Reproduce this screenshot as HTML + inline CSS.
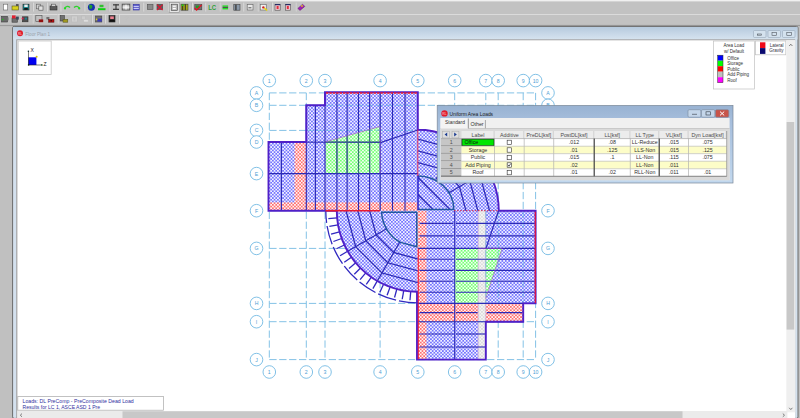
<!DOCTYPE html>
<html><head><meta charset="utf-8"><title>Floor Plan</title>
<style>
html,body{margin:0;padding:0;width:800px;height:418px;overflow:hidden;background:#c0c0c0;}
svg{position:absolute;left:0;top:0;display:block}
</style></head><body>
<svg width="800" height="418" viewBox="0 0 800 418" font-family="Liberation Sans, sans-serif">
<!-- toolbar -->
<rect x="0" y="0" width="800" height="418" fill="#c0c0c0"/><rect x="0" y="0" width="800" height="26" fill="#c2c2c2"/>
<rect x="0" y="0" width="800" height="1.4" fill="#f0f0f0"/>
<rect x="0" y="14" width="800" height="0.8" fill="#e2e2e2"/>
<rect x="0" y="24.9" width="800" height="1.2" fill="#9c9c9c"/>
<rect x="3.4" y="4.2" width="4.3" height="5.8" fill="#ffffff" stroke="#6a6a6a" stroke-width="0.6"/>
<rect x="12" y="6" width="6.6" height="4" fill="#d8d020" stroke="#5a5a20" stroke-width="0.6"/>
<rect x="16" y="4.2" width="2.6" height="1.6" fill="#404040"/>
<rect x="23" y="4.2" width="6" height="5.8" fill="#208a90" stroke="#202020" stroke-width="0.6"/>
<rect x="24.3" y="4.6" width="3.4" height="2.4" fill="#f0f0f0"/>
<rect x="24.2" y="8" width="3.6" height="1.8" fill="#101010"/>
<rect x="36.4" y="4.2" width="4" height="4.6" fill="#d0d0d0" stroke="#606060" stroke-width="0.6"/>
<rect x="38.8" y="6" width="4.2" height="4.2" fill="#e0e0e0" stroke="#505050" stroke-width="0.6"/>
<rect x="50" y="6" width="7" height="4" fill="#5a5a5a" stroke="#303030" stroke-width="0.6"/>
<rect x="51.5" y="4.2" width="4" height="2" fill="#e0e0e0" stroke="#505050" stroke-width="0.6"/>
<path d="M64.6,8.4 Q67,4.8 70,7.6" stroke="#30d030" stroke-width="1.4" fill="none"/><circle cx="65" cy="8.4" r="1.1" fill="#20e020"/>
<path d="M74,7.6 Q77,4.8 79.6,8.4" stroke="#30d030" stroke-width="1.4" fill="none"/><circle cx="79.2" cy="8.4" r="1.1" fill="#20e020"/>
<circle cx="91.4" cy="7.2" r="3.5" fill="#1830b0"/><path d="M89,5 Q91,4 92.5,6 L91.8,8.6 L89.6,9 Z" fill="#20a030"/>
<rect x="98" y="8.2" width="7.5" height="2" fill="#10d010"/>
<rect x="99.5" y="4.8" width="4" height="2.4" fill="#30c030"/>
<rect x="113" y="4.2" width="6" height="1.3" fill="#404040"/>
<rect x="113" y="8.7" width="6" height="1.3" fill="#404040"/>
<rect x="115.4" y="4.2" width="1.2" height="5.8" fill="#404040"/>
<rect x="122.2" y="4.2" width="7.6" height="5.8" fill="#c8c8c8" stroke="#505050" stroke-width="0.9"/>
<rect x="125.5" y="4.6" width="1" height="5" fill="#ffffff"/>
<rect x="122.6" y="6.6" width="6.8" height="1" fill="#ffffff"/>
<rect x="133.2" y="4.4" width="6" height="5.6" fill="#6868d0" stroke="#3030a0" stroke-width="0.6"/>
<rect x="133.6" y="6" width="5.2" height="0.8" fill="#e0e0ff"/>
<rect x="133.6" y="8" width="5.2" height="0.8" fill="#e0e0ff"/>
<rect x="147.4" y="4.4" width="5.6" height="5" fill="#8a8a8a" stroke="#505050" stroke-width="0.6"/>
<rect x="157" y="4.4" width="5.6" height="5" fill="#606060" stroke="#404040" stroke-width="0.6"/>
<path d="M157,4.6 L162.6,10 M162.6,4.6 L157,10" stroke="#e01030" stroke-width="1.1"/>
<rect x="169.2" y="2.6" width="10" height="9.8" fill="#e6e6e6" stroke="#8e8e8e" stroke-width="0.6"/>
<rect x="171.2" y="4.2" width="6.2" height="6.2" fill="#b8b8b8" stroke="#404040" stroke-width="0.6"/>
<rect x="172.8" y="5.6" width="3" height="1.2" fill="#ffffff"/>
<rect x="172.8" y="8" width="3" height="1.2" fill="#ffffff"/>
<rect x="181" y="4.2" width="7" height="6" fill="#a8a818" stroke="#404040" stroke-width="0.6"/>
<rect x="182.2" y="4.2" width="1" height="6" fill="#303030"/>
<rect x="184.8" y="4.2" width="1" height="6" fill="#303030"/>
<rect x="181.8" y="4.4" width="1.8" height="1.6" fill="#20d020"/>
<rect x="194.8" y="4.6" width="7" height="5.2" fill="#707070" stroke="#404040" stroke-width="0.6"/>
<rect x="196" y="5.6" width="3" height="2.6" fill="#20a020"/>
<path d="M194.6,7.8 L196.6,10 L201.6,4.8" stroke="#e81020" stroke-width="1.2" fill="none"/>
<text x="208.2" y="10.2" font-size="7" font-weight="bold" fill="#30a038" textLength="8" lengthAdjust="spacingAndGlyphs" font-family="Liberation Sans, sans-serif">LC</text>
<rect x="222.5" y="5.4" width="5.6" height="1.4" fill="#20e020"/>
<rect x="222.5" y="8" width="5.6" height="1.4" fill="#20e020"/>
<rect x="222.5" y="6.8" width="5.6" height="1.2" fill="#505050"/>
<rect x="233.8" y="4.6" width="6.2" height="5.6" fill="#8a98a8" stroke="#404040" stroke-width="0.6"/>
<rect x="235.2" y="4.6" width="1.4" height="5.6" fill="#404040"/>
<rect x="247.2" y="4.4" width="5.8" height="5.6" fill="#e8e8e8" stroke="#606060" stroke-width="0.6"/>
<rect x="248.4" y="7" width="3" height="1.4" fill="#808080"/>
<rect x="260.2" y="4.4" width="6" height="5.6" fill="#f0f0f0" stroke="#606060" stroke-width="0.6"/>
<circle cx="263.4" cy="7.4" r="1.2" fill="#d02020"/><path d="M264.2,8 L267.2,10.6" stroke="#e8d800" stroke-width="1.3"/>
<rect x="275" y="4.4" width="5.2" height="5.8" fill="#f0c8d0" stroke="#505050" stroke-width="0.6"/>
<rect x="275" y="4.2" width="5.2" height="1" fill="#101860"/>
<rect x="276.6" y="6" width="2" height="3" fill="#e03040"/>
<rect x="285.5" y="4.4" width="5" height="5.8" fill="#f0c8d0" stroke="#505050" stroke-width="0.6"/>
<rect x="285.5" y="4.2" width="5" height="1" fill="#101860"/>
<rect x="286.8" y="6" width="2" height="3" fill="#e03040"/>
<path d="M297.8,8.4 L302.6,4.2 L304.8,6.4 L300,10.4 Z" fill="#a020b0" stroke="#602070" stroke-width="0.5"/><circle cx="302" cy="6" r="0.9" fill="#e0c020"/>
<rect x="1.6" y="16.4" width="6" height="5.6" fill="#6a6a6a" stroke="#404040" stroke-width="0.6"/>
<rect x="7.6" y="17.4" width="1.2" height="3" fill="#909090"/>
<circle cx="2.8" cy="19.6" r="0.8" fill="#20c020"/>
<rect x="12" y="18" width="5.4" height="4.2" fill="#707070" stroke="#404040" stroke-width="0.6"/>
<rect x="12" y="15.4" width="3.6" height="3" fill="#e02030"/>
<rect x="16" y="16.6" width="2.8" height="3" fill="#3a4a5a"/>
<rect x="22.4" y="16.8" width="5.6" height="5" fill="#505050" stroke="#303030" stroke-width="0.6"/>
<circle cx="22.6" cy="18.6" r="1" fill="#e02050"/>
<rect x="25" y="17.6" width="2" height="2" fill="#208090"/>
<rect x="35.8" y="15.4" width="6.2" height="6" fill="#c0c0c0" stroke="#505050" stroke-width="0.6"/>
<rect x="38.8" y="19.4" width="4.4" height="2.8" fill="#901010"/>
<rect x="46.4" y="17" width="3" height="2.4" fill="#707070"/>
<rect x="48.6" y="19.4" width="5.4" height="2.8" fill="#b01010" stroke="#501010" stroke-width="0.5"/>
<circle cx="51.2" cy="20.8" r="0.7" fill="#101010"/>
<rect x="60.2" y="15.6" width="4.2" height="5.4" fill="#707070" stroke="#404040" stroke-width="0.6"/>
<rect x="63" y="19.4" width="4.8" height="2.8" fill="#a09820" stroke="#505020" stroke-width="0.5"/>
<rect x="71.4" y="16" width="6" height="6" fill="#d0d0d0" stroke="#bcbcbc" stroke-width="0.7"/>
<rect x="73.4" y="17.6" width="2" height="3" fill="#c4c4c4"/>
<rect x="81.6" y="16" width="4" height="3.6" fill="#cccccc" stroke="#bcbcbc" stroke-width="0.7"/>
<rect x="83.6" y="19.6" width="4.6" height="2.4" fill="#dedede" stroke="#c0c0c0" stroke-width="0.6"/>
<rect x="95.6" y="16" width="6.2" height="6" fill="#707070" stroke="#404040" stroke-width="0.6"/>
<rect x="97.4" y="18.6" width="4.4" height="3" fill="#3a3ab8"/>
<circle cx="96.6" cy="19.4" r="0.8" fill="#e0d020"/>
<rect x="109" y="15.6" width="6" height="6.4" fill="#303030" stroke="#202020" stroke-width="0.6"/>
<rect x="110.2" y="16.4" width="3.6" height="2.6" fill="#f08090"/>
<rect x="110" y="20" width="4.6" height="1.6" fill="#101010"/>
<path d="M124.6,17.4 Q126.4,15.6 128.4,17.2 Q127.8,18.8 126.4,19.4 L126.4,20.4 M126.4,21.4 L126.4,22" stroke="#c0c0c0" stroke-width="0.9" fill="none"/>
<rect x="32.7" y="2.6" width="0.7" height="9" fill="#b4b4b4"/><rect x="33.400000000000006" y="2.6" width="0.6" height="9" fill="#ececec"/>
<rect x="46.7" y="2.6" width="0.7" height="9" fill="#b4b4b4"/><rect x="47.400000000000006" y="2.6" width="0.6" height="9" fill="#ececec"/>
<rect x="59.9" y="2.6" width="0.7" height="9" fill="#b4b4b4"/><rect x="60.6" y="2.6" width="0.6" height="9" fill="#ececec"/>
<rect x="83.9" y="2.6" width="0.7" height="9" fill="#b4b4b4"/><rect x="84.60000000000001" y="2.6" width="0.6" height="9" fill="#ececec"/>
<rect x="108.9" y="2.6" width="0.7" height="9" fill="#b4b4b4"/><rect x="109.60000000000001" y="2.6" width="0.6" height="9" fill="#ececec"/>
<rect x="142.8" y="2.6" width="0.7" height="9" fill="#b4b4b4"/><rect x="143.5" y="2.6" width="0.6" height="9" fill="#ececec"/>
<rect x="167.1" y="2.6" width="0.7" height="9" fill="#b4b4b4"/><rect x="167.79999999999998" y="2.6" width="0.6" height="9" fill="#ececec"/>
<rect x="191.3" y="2.6" width="0.7" height="9" fill="#b4b4b4"/><rect x="192.0" y="2.6" width="0.6" height="9" fill="#ececec"/>
<rect x="204.8" y="2.6" width="0.7" height="9" fill="#b4b4b4"/><rect x="205.5" y="2.6" width="0.6" height="9" fill="#ececec"/>
<rect x="219.0" y="2.6" width="0.7" height="9" fill="#b4b4b4"/><rect x="219.7" y="2.6" width="0.6" height="9" fill="#ececec"/>
<rect x="242.8" y="2.6" width="0.7" height="9" fill="#b4b4b4"/><rect x="243.5" y="2.6" width="0.6" height="9" fill="#ececec"/>
<rect x="257.0" y="2.6" width="0.7" height="9" fill="#b4b4b4"/><rect x="257.7" y="2.6" width="0.6" height="9" fill="#ececec"/>
<rect x="271.5" y="2.6" width="0.7" height="9" fill="#b4b4b4"/><rect x="272.2" y="2.6" width="0.6" height="9" fill="#ececec"/>
<rect x="295.0" y="2.6" width="0.7" height="9" fill="#b4b4b4"/><rect x="295.7" y="2.6" width="0.6" height="9" fill="#ececec"/>
<rect x="32.0" y="14.6" width="0.7" height="9" fill="#b4b4b4"/><rect x="32.7" y="14.6" width="0.6" height="9" fill="#ececec"/>
<rect x="57.0" y="14.6" width="0.7" height="9" fill="#b4b4b4"/><rect x="57.7" y="14.6" width="0.6" height="9" fill="#ececec"/>
<rect x="91.5" y="14.6" width="0.7" height="9" fill="#b4b4b4"/><rect x="92.2" y="14.6" width="0.6" height="9" fill="#ececec"/>
<rect x="104.5" y="14.6" width="0.7" height="9" fill="#b4b4b4"/><rect x="105.2" y="14.6" width="0.6" height="9" fill="#ececec"/>
<rect x="118.5" y="14.6" width="0.7" height="9" fill="#b4b4b4"/><rect x="119.2" y="14.6" width="0.6" height="9" fill="#ececec"/>
<!-- MDI child frame -->
<linearGradient id="ttg" x1="0" y1="0" x2="0" y2="1"><stop offset="0" stop-color="#b6cade"/><stop offset="1" stop-color="#d6e3ef"/></linearGradient>
<rect x="12.6" y="26.4" width="785.4" height="392" rx="1.5" fill="#d4e1ee" stroke="#6a6a6a" stroke-width="1"/>
<rect x="13.2" y="27" width="784.3" height="12.4" fill="url(#ttg)"/>
<circle cx="20" cy="33.3" r="3" fill="#e01c2c"/><text x="20" y="34.6" font-size="3.2" fill="#ffd0d0" text-anchor="middle">RL</text>
<text x="25.3" y="35.6" font-size="5.3" textLength="24.7" lengthAdjust="spacingAndGlyphs" fill="#9aa2aa">Floor Plan 1</text>
<g fill="#d4e2ee" stroke="#98a8b8" stroke-width="0.6">
<rect x="753.5" y="30.5" width="12.5" height="7" rx="1"/>
<rect x="768" y="30.5" width="12.5" height="7" rx="1"/>
<rect x="782.5" y="30.5" width="12.5" height="7" rx="1"/>
</g>
<g stroke="#505860" stroke-width="0.6" fill="none">
<rect x="757.5" y="34" width="4" height="1.2"/>
<rect x="772" y="32.5" width="4.5" height="3"/>
<rect x="786.8" y="32.5" width="4.5" height="3"/>
</g>
<rect x="16.2" y="39.3" width="779" height="380" fill="#a4a4a4"/>
<rect x="17.4" y="40.3" width="777.8" height="378" fill="#ffffff"/>
<!-- drawing -->
<defs><pattern id="pb" width="3.4" height="3.4" patternUnits="userSpaceOnUse"><rect width="3.4" height="3.4" fill="#f2f2ff"/><rect width="1.7" height="1.7" fill="#7474ff"/><rect x="1.7" y="1.7" width="1.7" height="1.7" fill="#7474ff"/></pattern><pattern id="pr" width="3.4" height="3.4" patternUnits="userSpaceOnUse"><rect width="3.4" height="3.4" fill="#fff4f4"/><rect width="1.7" height="1.7" fill="#ff7070"/><rect x="1.7" y="1.7" width="1.7" height="1.7" fill="#ff7070"/></pattern><pattern id="pg" width="3.4" height="3.4" patternUnits="userSpaceOnUse"><rect width="3.4" height="3.4" fill="#f4fff4"/><rect width="1.7" height="1.7" fill="#74ff74"/><rect x="1.7" y="1.7" width="1.7" height="1.7" fill="#74ff74"/></pattern><pattern id="pw" width="3.4" height="3.4" patternUnits="userSpaceOnUse"><rect width="3.4" height="3.4" fill="#f6f6f6"/><rect width="1.7" height="1.7" fill="#dcdcdc"/><rect x="1.7" y="1.7" width="1.7" height="1.7" fill="#dcdcdc"/></pattern></defs>
<g stroke="#84c2e6" stroke-width="1.0" stroke-dasharray="7.3,2.6" fill="none">
<line x1="269.3" y1="92.9" x2="535.6" y2="92.9"/>
<line x1="269.3" y1="105.3" x2="535.6" y2="105.3"/>
<line x1="269.3" y1="130.4" x2="417.8" y2="130.4"/>
<line x1="269.3" y1="142" x2="417.8" y2="142"/>
<line x1="269.3" y1="210.7" x2="535.6" y2="210.7"/>
<line x1="269.3" y1="248.4" x2="535.6" y2="248.4"/>
<line x1="269.3" y1="303.4" x2="535.6" y2="303.4"/>
<line x1="269.3" y1="321.7" x2="535.6" y2="321.7"/>
<line x1="269.3" y1="359.6" x2="535.6" y2="359.6"/>
<line x1="269.3" y1="92.9" x2="269.3" y2="359.6"/>
<line x1="306.3" y1="92.9" x2="306.3" y2="359.6"/>
<line x1="325" y1="92.9" x2="325" y2="359.6"/>
<line x1="380.1" y1="92.9" x2="380.1" y2="359.6"/>
<line x1="417.8" y1="92.9" x2="417.8" y2="359.6"/>
<line x1="454.7" y1="92.9" x2="454.7" y2="359.6"/>
<line x1="485.8" y1="92.9" x2="485.8" y2="359.6"/>
<line x1="498.2" y1="92.9" x2="498.2" y2="359.6"/>
<line x1="523.2" y1="92.9" x2="523.2" y2="359.6"/>
<line x1="535.6" y1="92.9" x2="535.6" y2="359.6"/>
</g>
<g stroke="#6cb6e2" stroke-width="0.85" fill="#fff">
<circle cx="269.3" cy="80.6" r="6.3"/>
<circle cx="269.3" cy="372.0" r="6.3"/>
<circle cx="306.3" cy="80.6" r="6.3"/>
<circle cx="306.3" cy="372.0" r="6.3"/>
<circle cx="325" cy="80.6" r="6.3"/>
<circle cx="325" cy="372.0" r="6.3"/>
<circle cx="380.1" cy="80.6" r="6.3"/>
<circle cx="380.1" cy="372.0" r="6.3"/>
<circle cx="417.8" cy="80.6" r="6.3"/>
<circle cx="417.8" cy="372.0" r="6.3"/>
<circle cx="454.7" cy="80.6" r="6.3"/>
<circle cx="454.7" cy="372.0" r="6.3"/>
<circle cx="485.8" cy="80.6" r="6.3"/>
<circle cx="485.8" cy="372.0" r="6.3"/>
<circle cx="498.2" cy="80.6" r="6.3"/>
<circle cx="498.2" cy="372.0" r="6.3"/>
<circle cx="523.2" cy="80.6" r="6.3"/>
<circle cx="523.2" cy="372.0" r="6.3"/>
<circle cx="535.6" cy="80.6" r="6.3"/>
<circle cx="535.6" cy="372.0" r="6.3"/>
<circle cx="256.5" cy="92.9" r="6.3"/>
<circle cx="548.0" cy="92.9" r="6.3"/>
<circle cx="256.5" cy="105.3" r="6.3"/>
<circle cx="548.0" cy="105.3" r="6.3"/>
<circle cx="256.5" cy="130.4" r="6.3"/>
<circle cx="548.0" cy="130.4" r="6.3"/>
<circle cx="256.5" cy="142" r="6.3"/>
<circle cx="548.0" cy="142" r="6.3"/>
<circle cx="256.5" cy="173.6" r="6.3"/>
<circle cx="548.0" cy="173.6" r="6.3"/>
<circle cx="256.5" cy="210.7" r="6.3"/>
<circle cx="548.0" cy="210.7" r="6.3"/>
<circle cx="256.5" cy="248.4" r="6.3"/>
<circle cx="548.0" cy="248.4" r="6.3"/>
<circle cx="256.5" cy="303.4" r="6.3"/>
<circle cx="548.0" cy="303.4" r="6.3"/>
<circle cx="256.5" cy="321.7" r="6.3"/>
<circle cx="548.0" cy="321.7" r="6.3"/>
<circle cx="256.5" cy="359.6" r="6.3"/>
<circle cx="548.0" cy="359.6" r="6.3"/>
</g>
<g fill="#4e9ed4" font-family="Liberation Sans, sans-serif" font-size="5.2" text-anchor="middle">
<text x="269.3" y="82.5">1</text>
<text x="269.3" y="373.9">1</text>
<text x="306.3" y="82.5">2</text>
<text x="306.3" y="373.9">2</text>
<text x="325" y="82.5">3</text>
<text x="325" y="373.9">3</text>
<text x="380.1" y="82.5">4</text>
<text x="380.1" y="373.9">4</text>
<text x="417.8" y="82.5">5</text>
<text x="417.8" y="373.9">5</text>
<text x="454.7" y="82.5">6</text>
<text x="454.7" y="373.9">6</text>
<text x="485.8" y="82.5">7</text>
<text x="485.8" y="373.9">7</text>
<text x="498.2" y="82.5">8</text>
<text x="498.2" y="373.9">8</text>
<text x="523.2" y="82.5">9</text>
<text x="523.2" y="373.9">9</text>
<text x="535.6" y="82.5">10</text>
<text x="535.6" y="373.9">10</text>
<text x="256.5" y="94.8">A</text>
<text x="548.0" y="94.8">A</text>
<text x="256.5" y="107.2">B</text>
<text x="548.0" y="107.2">B</text>
<text x="256.5" y="132.3">C</text>
<text x="548.0" y="132.3">C</text>
<text x="256.5" y="143.9">D</text>
<text x="548.0" y="143.9">D</text>
<text x="256.5" y="175.5">E</text>
<text x="548.0" y="175.5">E</text>
<text x="256.5" y="212.6">F</text>
<text x="548.0" y="212.6">F</text>
<text x="256.5" y="250.3">G</text>
<text x="548.0" y="250.3">G</text>
<text x="256.5" y="305.3">H</text>
<text x="548.0" y="305.3">H</text>
<text x="256.5" y="323.6">I</text>
<text x="548.0" y="323.6">I</text>
<text x="256.5" y="361.5">J</text>
<text x="548.0" y="361.5">J</text>
</g>
<path d="M325,92.1 L417.8,92.1 L417.8,129.8 A81.0,81.0 0 0 1 498.8,210.8 L535.6,210.7 L535.6,303.4 L523.2,303.4 L523.2,321.7 L485.8,321.7 L485.8,359.6 L417,359.6 L417,291.8 A81.0,81.0 0 0 1 336.8,210.8 L268.5,210.7 L268.5,142 L306.3,142 L306.3,105.3 L325,105.3 Z" fill="url(#pb)"/>
<g fill="url(#pr)">
<rect x="294.7" y="142.0" width="11.6" height="68.7"/>
<rect x="268.5" y="202.4" width="149.3" height="8.3"/>
<rect x="417.3" y="210.7" width="9.1" height="148.9"/>
<rect x="417" y="303.4" width="106.2" height="18.3"/>
</g>
<g fill="url(#pg)">
<path d="M325.5,141.8 L380.1,126.5 L380.1,173.6 L325.5,173.6 Z"/>
<path d="M454.7,248.4 L502.2,248.4 L485.7,298.5 L485.7,303.4 L454.7,303.4 Z"/>
</g>
<rect x="478.2" y="210.7" width="7.5" height="148.9" fill="url(#pw)"/>
<path d="M478.2,210.7 L478.2,359.6 M485.7,210.7 L485.7,359.6" stroke="#c8a0d8" stroke-width="0.6"/>
<g stroke="#58b4dc" stroke-width="1" stroke-dasharray="7.3,2.6" fill="none" opacity="0.6">
<line x1="306.3" y1="105.3" x2="417.8" y2="105.3"/>
<line x1="306.3" y1="130.4" x2="417.8" y2="130.4"/>
<line x1="268.5" y1="173.6" x2="417.8" y2="173.6"/>
<line x1="417.8" y1="248.4" x2="535.6" y2="248.4"/>
<line x1="417.8" y1="303.4" x2="535.6" y2="303.4"/>
<line x1="417.8" y1="321.7" x2="523.2" y2="321.7"/>
<line x1="380.1" y1="92.9" x2="380.1" y2="210.7"/>
<line x1="485.8" y1="210.7" x2="485.8" y2="303.4"/>
<line x1="498.2" y1="210.7" x2="498.2" y2="303.4"/>
<line x1="523.2" y1="210.7" x2="523.2" y2="303.4"/>
</g>
<g stroke="#3028c0" stroke-width="1.3" fill="none">
<line x1="410.74" y1="291.49" x2="409.97" y2="300.26"/>
<line x1="403.73" y1="290.57" x2="402.21" y2="299.24"/>
<line x1="396.84" y1="289.04" x2="394.56" y2="297.54"/>
<line x1="390.1" y1="286.92" x2="387.09" y2="295.18"/>
<line x1="383.57" y1="284.21" x2="379.85" y2="292.19"/>
<line x1="377.3" y1="280.95" x2="372.9" y2="288.57"/>
<line x1="371.34" y1="277.15" x2="366.29" y2="284.36"/>
<line x1="365.73" y1="272.85" x2="360.08" y2="279.59"/>
<line x1="360.52" y1="268.08" x2="354.3" y2="274.3"/>
<line x1="355.75" y1="262.87" x2="349.01" y2="268.52"/>
<line x1="351.45" y1="257.26" x2="344.24" y2="262.31"/>
<line x1="347.65" y1="251.3" x2="340.03" y2="255.7"/>
<line x1="344.39" y1="245.03" x2="336.41" y2="248.75"/>
<line x1="341.68" y1="238.5" x2="333.42" y2="241.51"/>
<line x1="339.56" y1="231.76" x2="331.06" y2="234.04"/>
<line x1="338.03" y1="224.87" x2="329.36" y2="226.39"/>
<line x1="337.11" y1="217.86" x2="328.34" y2="218.63"/>
<path d="M417.8,302.8 A92.0,92.0 0 0 1 325.8,210.8" stroke-dasharray="19,3"/>
</g>
<g stroke="#2c2ab6" stroke-width="1.15" fill="none">
<line x1="336.9" y1="92.1" x2="336.9" y2="210.7"/>
<line x1="347.1" y1="92.1" x2="347.1" y2="210.7"/>
<line x1="358.5" y1="92.1" x2="358.5" y2="210.7"/>
<line x1="369.6" y1="92.1" x2="369.6" y2="210.7"/>
<line x1="380.2" y1="92.1" x2="380.2" y2="210.7"/>
<line x1="392.5" y1="92.1" x2="392.5" y2="210.7"/>
<line x1="405" y1="92.1" x2="405" y2="210.7"/>
<line x1="281.4" y1="142" x2="281.4" y2="210.7"/>
<line x1="315.4" y1="105.3" x2="315.4" y2="210.7"/>
<line x1="325" y1="92.1" x2="325" y2="210.7"/>
<line x1="306.3" y1="105.3" x2="306.3" y2="210.7"/>
<line x1="268.5" y1="173.6" x2="417.8" y2="173.6"/>
<path d="M268.5,142.0 L381.2,142.3 L417.8,130.0"/>
<line x1="419.5" y1="223.4" x2="453.4" y2="223.4"/>
<line x1="456" y1="223.4" x2="534.8" y2="223.4"/>
<line x1="419.5" y1="235.9" x2="453.4" y2="235.9"/>
<line x1="456" y1="235.9" x2="534.8" y2="235.9"/>
<line x1="417.8" y1="248.4" x2="535.6" y2="248.4"/>
<line x1="419.5" y1="259.2" x2="453.4" y2="259.2"/>
<line x1="456" y1="259.2" x2="534.8" y2="259.2"/>
<line x1="419.5" y1="270.3" x2="453.4" y2="270.3"/>
<line x1="456" y1="270.3" x2="534.8" y2="270.3"/>
<line x1="419.5" y1="281.2" x2="453.4" y2="281.2"/>
<line x1="456" y1="281.2" x2="534.8" y2="281.2"/>
<line x1="419.5" y1="292.2" x2="453.4" y2="292.2"/>
<line x1="456" y1="292.2" x2="534.8" y2="292.2"/>
<line x1="419.5" y1="312.6" x2="453.4" y2="312.6"/>
<line x1="456" y1="312.6" x2="477.6" y2="312.6"/>
<line x1="486.8" y1="312.6" x2="522.4" y2="312.6"/>
<line x1="419.5" y1="334" x2="453.4" y2="334"/>
<line x1="456" y1="334" x2="485" y2="334"/>
<line x1="419.5" y1="347" x2="453.4" y2="347"/>
<line x1="456" y1="347" x2="485" y2="347"/>
<line x1="454.7" y1="210.7" x2="454.7" y2="359.6"/>
<path d="M498.6,210.7 L486,248.4"/>
<line x1="417.8" y1="303.4" x2="535.6" y2="303.4"/>
<line x1="417.8" y1="321.7" x2="523.2" y2="321.7"/>
</g>
<clipPath id="cg1"><path d="M325.5,141.8 L380.1,126.5 L380.1,173.6 L325.5,173.6 Z"/></clipPath><clipPath id="cg2"><path d="M454.7,248.4 L502.2,248.4 L485.7,298.5 L485.7,303.4 L454.7,303.4 Z"/></clipPath>
<g clip-path="url(#cg1)" stroke="#3a7474" stroke-width="0.95">
<line x1="336.9" y1="120" x2="336.9" y2="180"/>
<line x1="347.1" y1="120" x2="347.1" y2="180"/>
<line x1="358.5" y1="120" x2="358.5" y2="180"/>
<line x1="369.6" y1="120" x2="369.6" y2="180"/>
<line x1="320" y1="142" x2="382" y2="142"/>
</g>
<path d="M325.5,141.8 L380.1,126.5 L380.1,173.6" stroke="#a050c0" stroke-width="0.6" fill="none"/>
<path d="M478.2,248.4 L502.2,248.4 L485.7,298.5" stroke="#a050c0" stroke-width="0.6" fill="none"/>
<clipPath id="cs1"><path d="M417.8,291.8 A81.0,81.0 0 0 1 377.3,280.95 L399.8,241.98 A36.0,36.0 0 0 0 417.8,246.8 Z"/></clipPath>
<g clip-path="url(#cs1)" stroke="#2c2ab6" stroke-width="1.25">
<line x1="347.81" y1="240.19" x2="463.72" y2="271.24"/>
<line x1="344.83" y1="251.29" x2="460.74" y2="282.35"/>
<line x1="341.91" y1="262.21" x2="457.82" y2="293.27"/>
</g>
<clipPath id="cs2"><path d="M377.3,280.95 A81.0,81.0 0 0 1 347.65,251.3 L386.62,228.8 A36.0,36.0 0 0 0 399.8,241.98 Z"/></clipPath>
<g clip-path="url(#cs2)" stroke="#2c2ab6" stroke-width="1.25">
<line x1="342.49" y1="201.25" x2="427.35" y2="286.11"/>
<line x1="334.36" y1="209.39" x2="419.21" y2="294.24"/>
<line x1="326.37" y1="217.38" x2="411.22" y2="302.23"/>
</g>
<clipPath id="cs3"><path d="M347.65,251.3 A81.0,81.0 0 0 1 336.8,210.8 L381.8,210.8 A36.0,36.0 0 0 0 386.62,228.8 Z"/></clipPath>
<g clip-path="url(#cs3)" stroke="#2c2ab6" stroke-width="1.25">
<line x1="357.36" y1="164.88" x2="388.41" y2="280.79"/>
<line x1="346.25" y1="167.86" x2="377.31" y2="283.77"/>
<line x1="335.33" y1="170.78" x2="366.39" y2="286.69"/>
</g>
<clipPath id="cs4"><path d="M417.8,129.8 A81.0,81.0 0 0 1 458.3,140.65 L435.8,179.62 A36.0,36.0 0 0 0 417.8,174.8 Z"/></clipPath>
<g clip-path="url(#cs4)" stroke="#2c2ab6" stroke-width="1.25">
<line x1="487.79" y1="181.41" x2="371.88" y2="150.36"/>
<line x1="490.77" y1="170.31" x2="374.86" y2="139.25"/>
<line x1="493.69" y1="159.39" x2="377.78" y2="128.33"/>
</g>
<clipPath id="cs5"><path d="M458.3,140.65 A81.0,81.0 0 0 1 487.95,170.3 L448.98,192.8 A36.0,36.0 0 0 0 435.8,179.62 Z"/></clipPath>
<g clip-path="url(#cs5)" stroke="#2c2ab6" stroke-width="1.25">
<line x1="493.11" y1="220.35" x2="408.25" y2="135.49"/>
<line x1="501.24" y1="212.21" x2="416.39" y2="127.36"/>
<line x1="509.23" y1="204.22" x2="424.38" y2="119.37"/>
</g>
<clipPath id="cs6"><path d="M487.95,170.3 A81.0,81.0 0 0 1 498.8,210.8 L453.8,210.8 A36.0,36.0 0 0 0 448.98,192.8 Z"/></clipPath>
<g clip-path="url(#cs6)" stroke="#2c2ab6" stroke-width="1.25">
<line x1="478.24" y1="256.72" x2="447.19" y2="140.81"/>
<line x1="489.35" y1="253.74" x2="458.29" y2="137.83"/>
<line x1="500.27" y1="250.82" x2="469.21" y2="134.91"/>
</g>
<g stroke="#2c2ab6" stroke-width="1.25" fill="none">
<line x1="399.8" y1="241.98" x2="377.3" y2="280.95"/>
<line x1="386.62" y1="228.8" x2="347.65" y2="251.3"/>
<line x1="435.8" y1="179.62" x2="458.3" y2="140.65"/>
<line x1="448.98" y1="192.8" x2="487.95" y2="170.3"/>
</g>
<path d="M381.6,212.3 L416.8,212.3 L416.8,246.8 L400.5,242.4 A36,36 0 0 1 381.6,212.3 Z" stroke="#23589e" stroke-width="1.5" fill="none" stroke-linejoin="round"/>
<clipPath id="ciq"><path d="M418,176 A35.8,33.5 0 0 1 453.8,209.5 L418,209.5 Z"/></clipPath>
<g clip-path="url(#ciq)" stroke="#2c2ab6" stroke-width="1.25"><line x1="410" y1="169.5" x2="460" y2="219.5"/><line x1="400" y1="176.5" x2="450" y2="226.5"/></g>
<path d="M418,176 A35.8,33.5 0 0 1 453.8,209.5 L418,209.5" stroke="#23589e" stroke-width="1.5" fill="none"/>
<line x1="418" y1="175.5" x2="418" y2="210" stroke="#2a22c8" stroke-width="1.5"/>
<path d="M325,92.1 L417.8,92.1 L417.8,129.8 A81.0,81.0 0 0 1 498.8,210.8 L535.6,210.7 L535.6,303.4 L523.2,303.4 L523.2,321.7 L485.8,321.7 L485.8,359.6 L417,359.6 L417,291.8 A81.0,81.0 0 0 1 336.8,210.8 L268.5,210.7 L268.5,142 L306.3,142 L306.3,105.3 L325,105.3 Z" fill="none" stroke="#5020c8" stroke-width="1.9"/>
<line x1="326.0" y1="93.0" x2="416.8" y2="93.0" stroke="#f01828" stroke-width="1.4" stroke-dasharray="2.4,1"/>
<line x1="417.8" y1="129.5" x2="417.8" y2="176" stroke="#e82040" stroke-width="0.9"/>
<line x1="535.3000000000001" y1="211.7" x2="535.3000000000001" y2="302.9" stroke="#f01030" stroke-width="1.1"/>
<line x1="418.3" y1="248.4" x2="418.3" y2="359.1" stroke="#ee1838" stroke-width="1.0"/>
<line x1="325.5" y1="210.7" x2="380" y2="210.7" stroke="#e81830" stroke-width="1.4"/>
<line x1="454" y1="210.7" x2="499" y2="210.7" stroke="#e01830" stroke-width="0.9" stroke-dasharray="1.5,1.5"/>
<!-- dialog -->
<linearGradient id="dtg" x1="0" y1="0" x2="0" y2="1"><stop offset="0" stop-color="#98b2d2"/><stop offset="0.2" stop-color="#a6bedc"/><stop offset="1" stop-color="#c2d8ee"/></linearGradient>
<rect x="437.2" y="105.4" width="295.8" height="77.6" fill="url(#dtg)" stroke="#7a8898" stroke-width="0.7"/>
<circle cx="444.5" cy="113.4" r="3.2" fill="#e01c2c"/><text x="444.5" y="114.8" font-size="3.4" fill="#ffd0d0" text-anchor="middle">RL</text>
<text x="449.5" y="115.7" font-size="5.3" textLength="43.6" lengthAdjust="spacingAndGlyphs" fill="#1a1a1a">Uniform Area Loads</text>
<g stroke="#7a8a9c" stroke-width="0.6"><rect x="688" y="109.7" width="12.8" height="7.5" rx="1.2" fill="#c4d6ea"/><rect x="701.5" y="109.7" width="13.3" height="7.5" rx="1.2" fill="#c4d6ea"/><rect x="715.5" y="109.7" width="13.3" height="7.5" rx="1.2" fill="#c8544a"/></g>
<g stroke="#303840" stroke-width="0.6" fill="none"><line x1="692" y1="114.3" x2="697" y2="114.3"/><rect x="706" y="111.8" width="4.5" height="3.2"/></g>
<path d="M720,111.6 L724.2,115.4 M724.2,111.6 L720,115.4" stroke="#fff" stroke-width="1"/>
<rect x="440.4" y="118" width="289.2" height="62.2" fill="#f0f0f0"/>
<rect x="440.4" y="128.4" width="289.2" height="51.8" fill="#dadada"/>
<line x1="440.4" y1="128.5" x2="729.6" y2="128.5" stroke="#b8b8b8" stroke-width="0.6"/>
<rect x="440.6" y="118.3" width="27.6" height="10.4" fill="#f4f4f4"/>
<line x1="468.3" y1="118.5" x2="468.3" y2="128.3" stroke="#6a6a6a" stroke-width="0.7"/>
<line x1="485.4" y1="120" x2="485.4" y2="128.3" stroke="#8a8a8a" stroke-width="0.7"/>
<text x="445" y="124.4" font-size="5.2" textLength="20" lengthAdjust="spacingAndGlyphs" fill="#303030">Standard</text>
<text x="470.4" y="125.6" font-size="5.3" fill="#303030">Other</text>
<rect x="461.5" y="131.0" width="265.2" height="7.6" fill="#ececec"/>
<line x1="494.1" y1="131.0" x2="494.1" y2="138.6" stroke="#c4c4c4" stroke-width="0.7"/>
<line x1="523.8" y1="131.0" x2="523.8" y2="138.6" stroke="#c4c4c4" stroke-width="0.7"/>
<line x1="553.3" y1="131.0" x2="553.3" y2="138.6" stroke="#c4c4c4" stroke-width="0.7"/>
<line x1="593.8" y1="131.0" x2="593.8" y2="138.6" stroke="#c4c4c4" stroke-width="0.7"/>
<line x1="629.9" y1="131.0" x2="629.9" y2="138.6" stroke="#c4c4c4" stroke-width="0.7"/>
<line x1="658.8" y1="131.0" x2="658.8" y2="138.6" stroke="#c4c4c4" stroke-width="0.7"/>
<line x1="688.1" y1="131.0" x2="688.1" y2="138.6" stroke="#c4c4c4" stroke-width="0.7"/>
<line x1="726.3" y1="131.0" x2="726.3" y2="138.6" stroke="#c4c4c4" stroke-width="0.7"/>
<text x="478" y="136.6" font-size="5.3" fill="#4a4a4a" text-anchor="middle">Label</text>
<text x="509.35" y="136.6" font-size="5.3" fill="#4a4a4a" text-anchor="middle">Additive</text>
<text x="538.95" y="136.6" font-size="5.3" fill="#4a4a4a" text-anchor="middle">PreDL[ksf]</text>
<text x="573.95" y="136.6" font-size="5.3" fill="#4a4a4a" text-anchor="middle">PostDL[ksf]</text>
<text x="612.25" y="136.6" font-size="5.3" fill="#4a4a4a" text-anchor="middle">LL[ksf]</text>
<text x="644.75" y="136.6" font-size="5.3" fill="#4a4a4a" text-anchor="middle">LL Type</text>
<text x="673.85" y="136.6" font-size="5.3" fill="#4a4a4a" text-anchor="middle">VL[ksf]</text>
<text x="707.6" y="136.6" font-size="5.3" fill="#4a4a4a" text-anchor="middle">Dyn Load[ksf]</text>
<rect x="442.6" y="131.2" width="6.9" height="6.7" fill="#dedede" stroke="#a8a8a8" stroke-width="0.5"/>
<rect x="452" y="131.2" width="6.9" height="6.7" fill="#dedede" stroke="#a8a8a8" stroke-width="0.5"/>
<path d="M444.6,134.5 L447.2,132.6 L447.2,136.4 Z" fill="#1a3a90"/><path d="M456.8,134.5 L454.2,132.6 L454.2,136.4 Z" fill="#1a3a90"/>
<rect x="441.0" y="138.6" width="20.5" height="7.6" fill="#c6c6c6"/>
<line x1="441.0" y1="145.9" x2="461.5" y2="145.9" stroke="#7a7a7a" stroke-width="0.7"/>
<text x="451.25" y="144.1" font-size="5.3" fill="#505050" text-anchor="middle">1</text>
<rect x="461.5" y="138.6" width="265.2" height="7.6" fill="#ffffff"/>
<rect x="461.9" y="139" width="32.2" height="6.8" fill="#00e600" stroke="#1a1a1a" stroke-width="0.8"/>
<text x="464.5" y="144" font-size="5.3" fill="#101010">Office</text>
<rect x="507.15" y="140.2" width="4.4" height="4.4" fill="#fff" stroke="#303030" stroke-width="0.6"/>
<text x="573.95" y="144" font-size="5.3" fill="#303030" text-anchor="middle">.012</text>
<text x="612.25" y="144" font-size="5.3" fill="#303030" text-anchor="middle">.08</text>
<text x="644.75" y="144" font-size="5.3" fill="#303030" text-anchor="middle">LL-Reduce</text>
<text x="673.85" y="144" font-size="5.3" fill="#303030" text-anchor="middle">.015</text>
<text x="707.6" y="144" font-size="5.3" fill="#303030" text-anchor="middle">.075</text>
<rect x="441.0" y="146.2" width="20.5" height="7.5" fill="#c6c6c6"/>
<line x1="441.0" y1="153.4" x2="461.5" y2="153.4" stroke="#7a7a7a" stroke-width="0.7"/>
<text x="451.25" y="151.7" font-size="5.3" fill="#505050" text-anchor="middle">2</text>
<rect x="461.5" y="146.2" width="265.2" height="7.5" fill="#fdfdc8"/>
<text x="478" y="151.6" font-size="5.3" fill="#303030" text-anchor="middle">Storage</text>
<rect x="507.15" y="147.8" width="4.4" height="4.4" fill="#fff" stroke="#303030" stroke-width="0.6"/>
<text x="573.95" y="151.6" font-size="5.3" fill="#303030" text-anchor="middle">.01</text>
<text x="612.25" y="151.6" font-size="5.3" fill="#303030" text-anchor="middle">.125</text>
<text x="644.75" y="151.6" font-size="5.3" fill="#303030" text-anchor="middle">LLS-Non</text>
<text x="673.85" y="151.6" font-size="5.3" fill="#303030" text-anchor="middle">.015</text>
<text x="707.6" y="151.6" font-size="5.3" fill="#303030" text-anchor="middle">.125</text>
<rect x="441.0" y="153.7" width="20.5" height="7.5" fill="#c6c6c6"/>
<line x1="441.0" y1="160.9" x2="461.5" y2="160.9" stroke="#7a7a7a" stroke-width="0.7"/>
<text x="451.25" y="159.2" font-size="5.3" fill="#505050" text-anchor="middle">3</text>
<rect x="461.5" y="153.7" width="265.2" height="7.5" fill="#ffffff"/>
<text x="478" y="159.1" font-size="5.3" fill="#303030" text-anchor="middle">Public</text>
<rect x="507.15" y="155.3" width="4.4" height="4.4" fill="#fff" stroke="#303030" stroke-width="0.6"/>
<text x="573.95" y="159.1" font-size="5.3" fill="#303030" text-anchor="middle">.015</text>
<text x="612.25" y="159.1" font-size="5.3" fill="#303030" text-anchor="middle">.1</text>
<text x="644.75" y="159.1" font-size="5.3" fill="#303030" text-anchor="middle">LL-Non</text>
<text x="673.85" y="159.1" font-size="5.3" fill="#303030" text-anchor="middle">.115</text>
<text x="707.6" y="159.1" font-size="5.3" fill="#303030" text-anchor="middle">.075</text>
<rect x="441.0" y="161.2" width="20.5" height="7.6" fill="#c6c6c6"/>
<line x1="441.0" y1="168.5" x2="461.5" y2="168.5" stroke="#7a7a7a" stroke-width="0.7"/>
<text x="451.25" y="166.7" font-size="5.3" fill="#505050" text-anchor="middle">4</text>
<rect x="461.5" y="161.2" width="265.2" height="7.6" fill="#fdfdc8"/>
<text x="478" y="166.6" font-size="5.3" fill="#303030" text-anchor="middle">Add Piping</text>
<rect x="507.15" y="162.8" width="4.4" height="4.4" fill="#fff" stroke="#303030" stroke-width="0.6"/>
<path d="M507.95,164.8 L509.05,166.2 L510.85,163.4" stroke="#202020" stroke-width="0.7" fill="none"/>
<text x="573.95" y="166.6" font-size="5.3" fill="#303030" text-anchor="middle">.02</text>
<text x="644.75" y="166.6" font-size="5.3" fill="#303030" text-anchor="middle">LL-Non</text>
<text x="673.85" y="166.6" font-size="5.3" fill="#303030" text-anchor="middle">.011</text>
<rect x="441.0" y="168.8" width="20.5" height="7.5" fill="#c6c6c6"/>
<line x1="441.0" y1="176" x2="461.5" y2="176" stroke="#7a7a7a" stroke-width="0.7"/>
<text x="451.25" y="174.3" font-size="5.3" fill="#505050" text-anchor="middle">5</text>
<rect x="461.5" y="168.8" width="265.2" height="7.5" fill="#ffffff"/>
<text x="478" y="174.2" font-size="5.3" fill="#303030" text-anchor="middle">Roof</text>
<rect x="507.15" y="170.4" width="4.4" height="4.4" fill="#fff" stroke="#303030" stroke-width="0.6"/>
<text x="573.95" y="174.2" font-size="5.3" fill="#303030" text-anchor="middle">.01</text>
<text x="612.25" y="174.2" font-size="5.3" fill="#303030" text-anchor="middle">.02</text>
<text x="644.75" y="174.2" font-size="5.3" fill="#303030" text-anchor="middle">RLL-Non</text>
<text x="673.85" y="174.2" font-size="5.3" fill="#303030" text-anchor="middle">.011</text>
<text x="707.6" y="174.2" font-size="5.3" fill="#303030" text-anchor="middle">.01</text>
<line x1="494.5" y1="138.6" x2="494.5" y2="176.3" stroke="#b0b0b0" stroke-width="0.7"/>
<line x1="524.2" y1="138.6" x2="524.2" y2="176.3" stroke="#b0b0b0" stroke-width="0.7"/>
<line x1="553.7" y1="138.6" x2="553.7" y2="176.3" stroke="#b0b0b0" stroke-width="0.7"/>
<line x1="594.2" y1="138.6" x2="594.2" y2="176.3" stroke="#b0b0b0" stroke-width="0.7"/>
<line x1="630.3" y1="138.6" x2="630.3" y2="176.3" stroke="#b0b0b0" stroke-width="0.7"/>
<line x1="659.2" y1="138.6" x2="659.2" y2="176.3" stroke="#b0b0b0" stroke-width="0.7"/>
<line x1="688.5" y1="138.6" x2="688.5" y2="176.3" stroke="#b0b0b0" stroke-width="0.7"/>
<line x1="461.5" y1="146.2" x2="726.7" y2="146.2" stroke="#b8b8b8" stroke-width="0.6"/>
<line x1="461.5" y1="153.7" x2="726.7" y2="153.7" stroke="#b8b8b8" stroke-width="0.6"/>
<line x1="461.5" y1="161.2" x2="726.7" y2="161.2" stroke="#b8b8b8" stroke-width="0.6"/>
<line x1="461.5" y1="168.8" x2="726.7" y2="168.8" stroke="#b8b8b8" stroke-width="0.6"/>
<line x1="461.5" y1="176.3" x2="726.7" y2="176.3" stroke="#b8b8b8" stroke-width="0.6"/>
<line x1="441.0" y1="138.6" x2="726.7" y2="138.6" stroke="#9a9a9a" stroke-width="0.6"/>
<line x1="594.2" y1="138.6" x2="594.2" y2="176.3" stroke="#303030" stroke-width="1"/>
<line x1="659.2" y1="138.6" x2="659.2" y2="176.3" stroke="#303030" stroke-width="1"/>
<line x1="726.7" y1="131.0" x2="726.7" y2="176.3" stroke="#8a8a8a" stroke-width="0.7"/>
<line x1="441.0" y1="176.3" x2="726.7" y2="176.3" stroke="#6a6a6a" stroke-width="0.7"/>
<!-- axis widget -->
<rect x="18.2" y="41" width="33" height="33.5" fill="#fff" stroke="#c8c8c8" stroke-width="0.8"/>
<rect x="28.3" y="57.3" width="8.1" height="7.7" fill="#0000f0"/>
<line x1="28.5" y1="51" x2="28.5" y2="65" stroke="#202020" stroke-width="0.6"/>
<line x1="28.5" y1="65" x2="43" y2="65" stroke="#202020" stroke-width="0.6"/>
<circle cx="36.6" cy="56.8" r="1" fill="#d8c000"/><circle cx="28.4" cy="51.2" r="0.8" fill="#103030"/><circle cx="41.6" cy="64.9" r="0.7" fill="#106020"/><circle cx="28.6" cy="64.9" r="0.8" fill="#102010"/>
<text x="30.6" y="52.2" font-size="5" fill="#202020">X</text>
<text x="43.5" y="66.3" font-size="5" fill="#202020">Z</text>
<!-- legend -->
<rect x="713.5" y="41" width="41" height="48" fill="#fff" stroke="#c0c0c0" stroke-width="0.7"/>
<text x="734" y="47" font-size="4.5" fill="#303030" text-anchor="middle">Area Load</text>
<text x="734" y="52.5" font-size="4.5" fill="#303030" text-anchor="middle">w/ Default</text>
<rect x="717.7" y="55.2" width="5.3" height="5.5" fill="#0000ff"/>
<rect x="717.7" y="60.7" width="5.3" height="5.5" fill="#00ff00"/>
<rect x="717.7" y="66.2" width="5.3" height="5.5" fill="#ff0000"/>
<rect x="717.7" y="71.7" width="5.3" height="5.5" fill="#c0c0c0"/>
<rect x="717.7" y="77.2" width="5.3" height="5.5" fill="#ff00ff"/>
<rect x="717.7" y="55.2" width="5.3" height="27.5" fill="none" stroke="#303030" stroke-width="0.5"/>
<g font-size="4.5" fill="#303030">
<text x="727.3" y="59.9">Office</text><text x="727.3" y="65.3">Storage</text><text x="727.3" y="70.7">Public</text><text x="727.3" y="76.1">Add Piping</text><text x="727.3" y="81.5">Roof</text>
</g>
<rect x="755.6" y="41" width="30.2" height="13.8" fill="#fff" stroke="#c0c0c0" stroke-width="0.7"/>
<rect x="760" y="42.3" width="5.4" height="5.8" fill="#ee0a1a"/>
<rect x="760" y="48.1" width="5.4" height="5.8" fill="#0a0a70"/>
<g font-size="4.5" fill="#303040" text-anchor="end"><text x="783.5" y="46.8">Lateral</text><text x="783.5" y="52.3">Gravity</text></g>
<!-- vertical scrollbar -->
<rect x="786.3" y="40.3" width="8.9" height="372" fill="#efefef"/>
<rect x="786.6" y="122" width="7.6" height="207.6" fill="#c8c8c8"/>
<path d="M789.2,46 L790.8,44.2 L792.4,46" stroke="#606060" stroke-width="0.8" fill="none"/>
<path d="M789.2,407.8 L790.8,409.6 L792.4,407.8" stroke="#606060" stroke-width="0.8" fill="none"/>
<!-- horizontal scrollbar -->
<rect x="17.4" y="411" width="770" height="7" fill="#ebebeb"/>
<rect x="122.5" y="411.3" width="560" height="6.7" fill="#c8c8c8"/>
<path d="M22,413.6 L20.3,415.2 L22,416.8" stroke="#606060" stroke-width="0.8" fill="none"/>
<path d="M782.8,413.6 L784.5,415.2 L782.8,416.8" stroke="#606060" stroke-width="0.8" fill="none"/>
<!-- status box -->
<rect x="17.8" y="396.4" width="145.8" height="13.8" fill="#fff" stroke="#a8a8a8" stroke-width="0.7"/>
<g font-size="5.4" fill="#3030a0" lengthAdjust="spacingAndGlyphs"><text x="22.5" y="402.6" textLength="111.2" lengthAdjust="spacingAndGlyphs">Loads: DL PreComp - PreComposite Dead Load</text><text x="22.5" y="408.5" textLength="77.5" lengthAdjust="spacingAndGlyphs">Results for LC 1, ASCE ASD 1 Pre</text></g>
</svg>
</body></html>
